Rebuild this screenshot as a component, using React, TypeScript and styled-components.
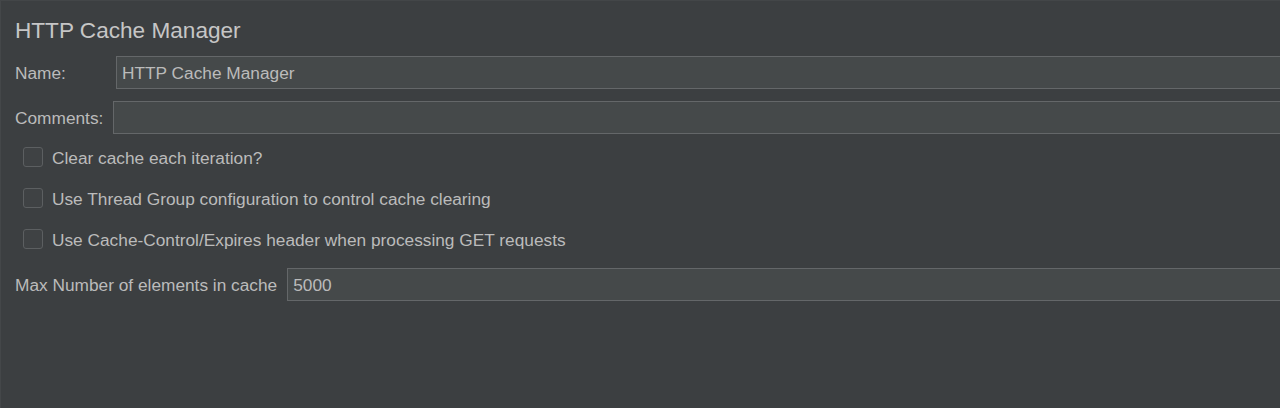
import React from 'react'
import styled, { createGlobalStyle } from 'styled-components'

const GlobalStyle = createGlobalStyle`
  html, body {
    margin: 0;
    padding: 0;
    background: #3c3f41;
  }
`

const Panel = styled.div`
  width: 1280px;
  height: 408px;
  box-sizing: border-box;
  overflow: hidden;
  background: #3c3f41;
  border-left: 1px solid #444749;
  border-top: 1px solid #434648;
  padding: 17px 0 0 14px;
  font-family: 'Liberation Sans', Arial, sans-serif;
  color: #bbbbbb;
  display: flex;
  flex-direction: column;
`

const Title = styled.div`
  font-size: 22.6px;
  line-height: 26px;
  color: #c6c6c6;
  margin-bottom: 12px;
`

const FieldRow = styled.div<{ $gap?: number }>`
  display: flex;
  align-items: center;
  height: 33px;
  margin-right: -20px;
  margin-bottom: ${({ $gap }) => $gap ?? 0}px;
`

const Label = styled.label<{ $width?: number }>`
  flex: none;
  font-size: 17.3px;
  padding-top: 1px;
  width: ${({ $width }) => ($width ? `${$width}px` : 'auto')};
  margin-right: ${({ $width }) => ($width ? 0 : 10)}px;
  white-space: nowrap;
`

const TextInput = styled.input`
  flex: 1;
  height: 33px;
  box-sizing: border-box;
  background: #45494a;
  border: 1px solid #646769;
  border-radius: 0;
  padding: 1px 5px 0;
  font-family: inherit;
  font-size: 17.3px;
  color: #bbbbbb;
  outline: none;
`

const CheckList = styled.div`
  display: flex;
  flex-direction: column;
  margin-top: 2px;
  margin-bottom: 9px;
`

const CheckRow = styled.label`
  display: flex;
  align-items: center;
  height: 41px;
  padding-left: 8px;
  font-size: 17.3px;
  gap: 9px;
`

const CheckText = styled.span`
  padding-top: 3px;
`

const Box = styled.span`
  flex: none;
  width: 20px;
  height: 20px;
  box-sizing: border-box;
  border: 1px solid #5c5f61;
  border-radius: 3px;
  background: #3f4244;
`

const options = [
  'Clear cache each iteration?',
  'Use Thread Group configuration to control cache clearing',
  'Use Cache-Control/Expires header when processing GET requests',
]

export default function App() {
  return (
    <>
      <GlobalStyle />
      <Panel>
        <Title>HTTP Cache Manager</Title>
        <FieldRow $gap={12}>
          <Label $width={101}>Name:</Label>
          <TextInput defaultValue="HTTP Cache Manager" />
        </FieldRow>
        <FieldRow>
          <Label $width={98}>Comments:</Label>
          <TextInput defaultValue="" />
        </FieldRow>
        <CheckList>
          {options.map((text) => (
            <CheckRow key={text}>
              <Box />
              <CheckText>{text}</CheckText>
            </CheckRow>
          ))}
        </CheckList>
        <FieldRow>
          <Label>Max Number of elements in cache</Label>
          <TextInput defaultValue="5000" />
        </FieldRow>
      </Panel>
    </>
  )
}
